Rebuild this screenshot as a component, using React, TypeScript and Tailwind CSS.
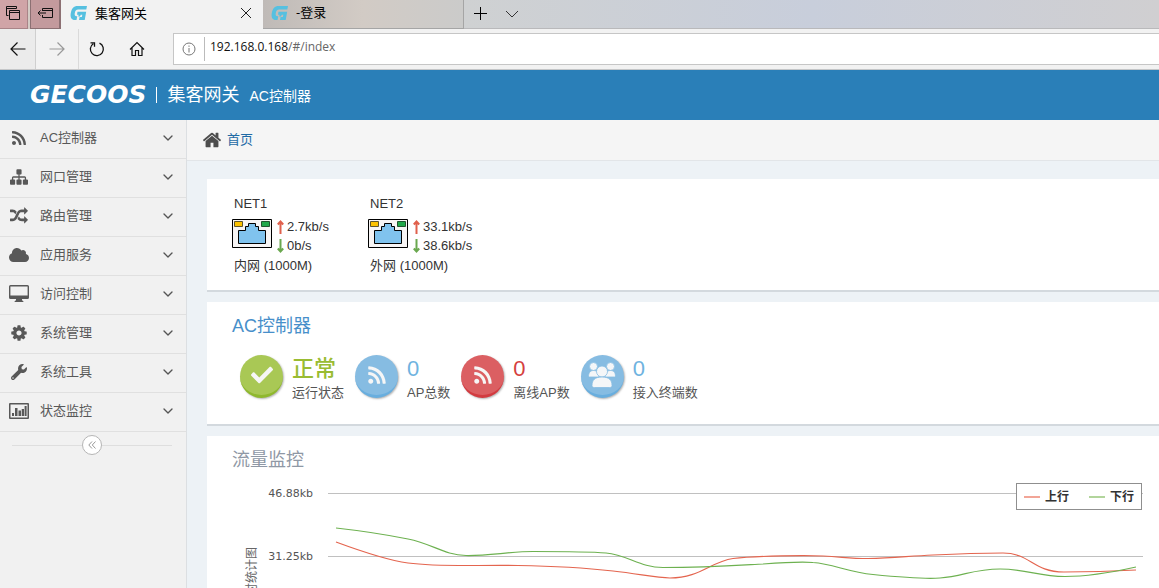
import React from "react";
import { FaRss, FaCloud, FaWrench, FaCheck } from "react-icons/fa";
import { ChevronDown } from "lucide-react";

const SANS = "font-['Liberation_Sans','Noto_Sans_CJK_SC',sans-serif]";
const UI = "font-['Open_Sans','Noto_Sans_CJK_SC',sans-serif]";

function Glyph({ d, className = "" }: { d: string; className?: string }) {
  return (
    <svg viewBox="0 0 1792 1792" fill="currentColor" className={className} aria-hidden="true">
      <path d={d} />
    </svg>
  );
}

const HOME =
  "M1472 992v480q0 26-19 45t-45 19h-384v-384h-256v384h-384q-26 0-45-19t-19-45v-480q0-1 .5-3t.5-3l575-474 575 474q1 2 1 6zm223-69l-62 74q-8 9-21 11h-3q-13 0-21-7l-692-577-692 577q-12 8-24 7-13-2-21-11l-62-74q-8-10-7-23.5t11-21.5l719-599q32-26 76-26t76 26l244 204v-195q0-14 9-23t23-9h192q14 0 23 9t9 23v408l219 182q10 8 11 21.5t-7 23.5z";
const SITEMAP =
  "M1792 1248v320q0 40-28 68t-68 28h-320q-40 0-68-28t-28-68v-320q0-40 28-68t68-28h96v-192h-512v192h96q40 0 68 28t28 68v320q0 40-28 68t-68 28h-320q-40 0-68-28t-28-68v-320q0-40 28-68t68-28h96v-192h-512v192h96q40 0 68 28t28 68v320q0 40-28 68t-68 28h-320q-40 0-68-28t-28-68v-320q0-40 28-68t68-28h96v-192q0-52 38-90t90-38h512v-192h-96q-40 0-68-28t-28-68v-320q0-40 28-68t68-28h320q40 0 68 28t28 68v320q0 40-28 68t-68 28h-96v192h512q52 0 90 38t38 90v192h96q40 0 68 28t28 68z";
const RANDOM =
  "M666 481q-60 92-137 273-22-45-37-72.5t-40.5-63.5-51-56.5-63-35-81.5-14.5h-224q-14 0-23-9t-9-23v-192q0-14 9-23t23-9h224q250 0 410 225zm1126 799q0 14-9 23l-320 320q-9 9-23 9-13 0-22.5-9.5t-9.5-22.5v-192q-32 0-85 .5t-81 1-73-1-71-5-64-10.5-63-18.5-58-28.5-59-40-55-53.5-56-69.5q59-93 136-273 22 45 37 72.5t40.5 63.5 51 56.5 63 35 81.5 14.5h256v-192q0-14 9-23t23-9q12 0 24 10l319 319q9 9 9 23zm0-896q0 14-9 23l-320 320q-9 9-23 9-13 0-22.5-9.5t-9.5-22.5v-192h-256q-48 0-87 15t-69 45-51 61.5-45 77.5q-32 62-78 171-29 66-49.5 111t-54 105-64 100-74 83-90 68.5-106.5 42-128 16.5h-224q-14 0-23-9t-9-23v-192q0-14 9-23t23-9h224q48 0 87-15t69-45 51-61.5 45-77.5q32-62 78-171 29-66 49.5-111t54-105 64-100 74-83 90-68.5 106.5-42 128-16.5h256v-192q0-14 9-23t23-9q12 0 24 10l319 319q9 9 9 23z";
const COG =
  "M1152 896q0-106-75-181t-181-75-181 75-75 181 75 181 181 75 181-75 75-181zm512-109v222q0 12-8 23t-20 13l-185 28q-19 54-39 91 35 50 107 138 10 12 10 25t-9 23q-27 37-99 108t-94 71q-12 0-26-9l-138-108q-44 23-91 38-16 136-29 186-7 28-36 28h-222q-14 0-24.5-8.5t-11.5-21.5l-28-184q-49-16-90-37l-141 107q-10 9-25 9-14 0-25-11-126-114-165-168-7-10-7-23 0-12 8-23 15-21 51-66.5t54-70.5q-27-50-41-99l-183-27q-13-2-21-12.5t-8-23.5v-222q0-12 8-23t19-13l186-28q14-46 39-92-40-57-107-138-10-12-10-24 0-10 9-23 26-36 98.5-107.5t94.5-71.5q13 0 26 10l138 107q44-23 91-38 16-136 29-186 7-28 36-28h222q14 0 24.5 8.5t11.5 21.5l28 184q49 16 90 37l142-107q9-9 24-9 13 0 25 10 129 119 165 170 7 8 7 22 0 12-8 23-15 21-51 66.5t-54 70.5q26 50 41 98l183 28q13 2 21 12.5t8 23.5z";

function DesktopIcon() {
  return (
    <svg viewBox="0 0 20 18" className="h-[18px] w-5" aria-hidden="true">
      <path
        fill="currentColor"
        fillRule="evenodd"
        d="M1.5 0h17A1.5 1.5 0 0 1 20 1.5v11a1.5 1.5 0 0 1-1.5 1.5H13v1.2l1.4 1V17H5.600v-.8l1.4-1V14H1.500A1.500 1.500 0 0 1 0 12.500v-11A1.500 1.500 0 0 1 1.500 0zM1.400 1.400v9.200h17.200V1.400z"
      />
    </svg>
  );
}

function BarsIcon() {
  return (
    <svg viewBox="0 0 20 16" className="h-4 w-5" fill="currentColor" aria-hidden="true">
      <path fillRule="evenodd" d="M1 0h18a1 1 0 0 1 1 1v14a1 1 0 0 1-1 1H1a1 1 0 0 1-1-1V1a1 1 0 0 1 1-1zm.5 1.500v13h17v-13z" />
      <path d="M3 10h2v3H3zM6 5h2.500v8H6zM9.500 7.500H12V13H9.500zM12.700 6H15v7h-2.300zM15.600 3h2v10h-2z" />
    </svg>
  );
}

function BrandMark({ className = "" }: { className?: string }) {
  return (
    <svg viewBox="0 0 17 15" className={className} fill="#56c0e0" aria-hidden="true">
      <path d="M7.500 0H17l-.7 3.500H8.200C6 3.500 5.200 4.800 4.800 7c-.4 2 0 3.200 1.700 3.200h.8L6.500 14H5C1.500 14 0 11.500.8 7 1.600 2.500 3.800 0 7.500 0z" />
      <path d="M7.500 5.800h8.700L14.700 14H9l.6-3h2.300l.4-2.300h-1.500L9.900 10.500H8.200l.4-1.800H7z" />
    </svg>
  );
}

const MENU: { label: string; icon: React.ReactNode }[] = [
  { label: "AC控制器", icon: <FaRss className="size-4" /> },
  { label: "网口管理", icon: <Glyph d={SITEMAP} className="size-[18px]" /> },
  { label: "路由管理", icon: <Glyph d={RANDOM} className="size-[18px]" /> },
  { label: "应用服务", icon: <FaCloud className="size-5" /> },
  { label: "访问控制", icon: <DesktopIcon /> },
  { label: "系统管理", icon: <Glyph d={COG} className="size-[18px]" /> },
  { label: "系统工具", icon: <FaWrench className="size-4" /> },
  { label: "状态监控", icon: <BarsIcon /> },
];

function BrowserChrome() {
  return (
    <header className={`shrink-0 bg-[#f2f2f2] text-black ${UI}`}>
      <div className="flex h-[29px] bg-linear-to-r from-[#d4cbc4] via-[#cccfd1] to-[#cfd0d2]">
        <button aria-label="标签页" className="flex w-7 items-center justify-center border-r border-b border-[#a98488] bg-[#d0a4a7] pr-0.5 pb-0.5">
          <svg viewBox="0 0 16 16" className="size-4" fill="none" stroke="#111" aria-hidden="true">
            <path d="M3.500 10.500h-2v-9h10v2M1.500 3.500h10M4.500 5.500h10v9h-10zM4.500 7.500h10" />
          </svg>
        </button>
        <button aria-label="搁置标签页" className="ml-0.5 flex w-[31px] items-center justify-center border border-t-0 border-r-2 border-[#8c7073] bg-[#c39a9d] pb-0.5">
          <svg viewBox="0 0 17 14" className="h-3.5 w-[17px]" fill="none" stroke="#111" aria-hidden="true">
            <path d="M5.500 5V2.500h10v9h-10V9M5.500 4.500h10M1 7h8M3.500 4.500 1 7l2.500 2.500" />
          </svg>
        </button>
        <div className="flex w-[202px] items-center bg-[#f2f2f2] pb-1 pl-[9px]">
          <BrandMark className="mt-0.5 h-[15px] w-[17px]" />
          <span className="ml-2 flex-1 text-[13px] leading-5">集客网关</span>
          <button aria-label="关闭标签页" className="mr-[11px]">
            <svg viewBox="0 0 12 12" className="size-3" stroke="#222" aria-hidden="true">
              <path d="m1 1 10 10M11 1 1 11" />
            </svg>
          </button>
        </div>
        <div className="flex w-[201px] items-center border-r border-b border-[#a5a5a5] bg-linear-to-r from-[#bfbab7] via-[#d2cbc5] to-[#cbcbca] pb-1 pl-2">
          <BrandMark className="mt-0.5 h-[15px] w-[17px]" />
          <span className="ml-2 text-[13px] leading-5">-登录</span>
        </div>
        <div className="flex flex-1 items-center gap-[18px] border-b border-[#b9b9bb] bg-linear-to-r from-[#cfd1d2] via-[#c8cedb] to-[#d0cfd1] pl-[9px]">
          <button aria-label="新建标签页">
            <svg viewBox="0 0 14 14" className="size-3.5" stroke="#000" aria-hidden="true">
              <path d="M7.500 0v13M1 6.500h13" />
            </svg>
          </button>
          <button aria-label="标签页列表">
            <svg viewBox="0 0 14 8" className="h-2 w-3.5" fill="none" stroke="#333" aria-hidden="true">
              <path d="m1 1 6 6 6-6" />
            </svg>
          </button>
        </div>
      </div>
      <div className="flex h-[41px] items-stretch border-b border-[#c4c6c8] text-[#111]">
        <button aria-label="后退" className="flex w-9 items-center justify-center border-r border-[#cfcfcf] bg-[#ebebeb]">
          <svg viewBox="0 0 16 14" className="h-3.5 w-4" fill="none" stroke="currentColor" strokeWidth="1.200" aria-hidden="true">
            <path d="M15.500 7H1M7.500.5 1 7l6.500 6.500" />
          </svg>
        </button>
        <button aria-label="前进" className="flex w-[42px] items-center justify-center text-[#999]">
          <svg viewBox="0 0 16 14" className="h-3.5 w-4" fill="none" stroke="currentColor" strokeWidth="1.200" aria-hidden="true">
            <path d="M.5 7H15M8.500.5 15 7l-6.500 6.500" />
          </svg>
        </button>
        <button aria-label="刷新" className="flex w-[37px] items-center justify-center border-l border-[#dadada]">
          <svg viewBox="0 0 16 16" className="size-4" fill="none" stroke="currentColor" strokeWidth="1.300" aria-hidden="true">
            <path d="M10.500 2.200A6.500 6.500 0 1 1 4.300 2.700M1.500 1.800h4v4" />
          </svg>
        </button>
        <button aria-label="主页" className="flex w-11 items-center justify-center">
          <svg viewBox="0 0 16 16" className="size-4" fill="none" stroke="currentColor" strokeWidth="1.200" aria-hidden="true">
            <path d="m1 8.500 7-7 7 7M3 7v7.500h3.500v-5h3v5H13V7" />
          </svg>
        </button>
        <div className="mt-1 mb-1 ml-3.5 flex flex-1 items-center border border-r-0 border-[#c6c6c6] bg-white">
          <svg viewBox="0 0 14 14" className="ml-2 size-3.5" fill="none" stroke="#777" aria-hidden="true">
            <circle cx="7" cy="7" r="6" />
            <path d="M7 6v4.500M7 3.500v1.300" />
          </svg>
          <span className="ml-2 h-6 w-px bg-[#bbb]" />
          <a href="#/index" className="ml-[5px] pb-1 text-[12px] leading-4 text-[#111]">
            192.168.0.168<span className="text-[#666]">/#/index</span>
          </a>
        </div>
      </div>
    </header>
  );
}

function Sidebar() {
  return (
    <nav className="w-[187px] shrink-0 border-r border-[#dcdfe2] bg-[#f1f1f1] text-[#585858]">
      <ul>
        {MENU.map((m) => (
          <li key={m.label} className="border-b border-[#e0e0e0]">
            <button className="flex h-[38px] w-full items-center pr-2.5 pb-0.5 pl-[9px] text-left">
              <span className="flex w-5 justify-center">{m.icon}</span>
              <span className="ml-[11px] flex-1 text-[13px] leading-5">{m.label}</span>
              <ChevronDown className="size-4 text-[#555]" strokeWidth={2} />
            </button>
          </li>
        ))}
      </ul>
      <div className="mt-[3px] flex items-center pr-3.5 pl-3">
        <span className="h-px flex-1 bg-[#dedede]" />
        <button aria-label="收起菜单" className="flex size-5 items-center justify-center rounded-full border border-[#b5b5b5] bg-white">
          <svg viewBox="0 0 8 8" className="size-2" fill="none" stroke="#999" aria-hidden="true">
            <path d="M4 .5.8 4 4 7.500M7.500.5 4.300 4l3.200 3.500" />
          </svg>
        </button>
        <span className="h-px flex-1 bg-[#dedede]" />
      </div>
    </nav>
  );
}

function PortIcon() {
  return (
    <svg viewBox="0 0 40 29" className="h-[29px] w-10" aria-hidden="true">
      <path d="M.5.5h39v28H.5z" fill="#f7f5f5" stroke="#000" />
      <path d="M2.500 2.500h8v5h-8z" fill="#fcc200" stroke="#5d552c" />
      <path d="M29.500 2.500h8v5h-8z" fill="#20a84a" stroke="#20552f" />
      <path d="M6.500 24.500v-13h7v-4h3v-3h7v3h3v4h7v13z" fill="#80c3ee" stroke="#000" />
    </svg>
  );
}

function Arrow({ down = false }: { down?: boolean }) {
  return (
    <svg viewBox="0 0 7 14" className="h-3.5 w-[7px]" fill="none" strokeWidth="2" stroke={down ? "#6aa84f" : "#e0604c"} aria-hidden="true">
      <path d={down ? "M3.500 0v12M.8 9.500l2.700 3 2.700-3" : "M3.500 14V2M.8 4.500l2.700-3 2.700 3"} />
    </svg>
  );
}

function Port({ name, up, down, kind }: { name: string; up: string; down: string; kind: string }) {
  return (
    <div className="w-[136px] text-[13px] text-[#333]">
      <div className="pl-0.5 leading-[18px]">{name}</div>
      <div className="mt-1 flex items-start">
        <div className="pt-0.5">
          <PortIcon />
        </div>
        <div className="ml-[5px] leading-[19px]">
          <div className="flex items-center gap-[3px]">
            <Arrow />
            {up}
          </div>
          <div className="flex items-center gap-[3px]">
            <Arrow down />
            {down}
          </div>
        </div>
      </div>
      <div className="mt-0.5 pl-0.5 leading-[18px]">{kind} (1000M)</div>
    </div>
  );
}

function UsersIcon() {
  return (
    <svg viewBox="0 0 28 26" className="h-[26px] w-7" fill="#f4f6f8" stroke="#86bce2" strokeWidth=".8" aria-hidden="true">
      <circle cx="5.500" cy="4.500" r="4" />
      <circle cx="22.500" cy="4.500" r="4" />
      <path d="M.5 15c0-4 1.500-6.500 5-6.500S11 11 11 15zM17 15c0-4 1.500-6.500 5.500-6.500s5 2.500 5 6.500z" />
      <circle cx="14" cy="9.500" r="5.500" />
      <path d="M4 23.500c0-5 2.500-8.500 10-8.500s10 3.500 10 8.500c0 1.500-1 2-2.500 2h-15c-1.500 0-2.500-.5-2.500-2z" />
    </svg>
  );
}

const DISCS = {
  green: "border-b-[#8fb82e] bg-[#a9c855]",
  blue: "border-b-[#69aede] bg-[#86bce2]",
  red: "border-b-[#d23b40] bg-[#db5f62]",
};

function Stat({ tone, icon, value, label, color }: { tone: keyof typeof DISCS; icon: React.ReactNode; value: string; label: string; color: string }) {
  return (
    <div className="flex items-start">
      <div className={`flex size-[43px] items-center justify-center rounded-full border-b-3 text-[#f6f6f6] shadow-[1px_1px_2px_rgba(0,0,0,0.3)] ${DISCS[tone]}`}>
        {icon}
      </div>
      <div className="ml-[9px]">
        <div className={`text-[22px] leading-7 ${color}`}>{value}</div>
        <div className="text-[13px] leading-5 text-[#555]">{label}</div>
      </div>
    </div>
  );
}

const CARD = "border-b-2 border-[#d3d9de] bg-white pl-[25px]";

function TrafficChart() {
  return (
    <div className="relative mt-[13px] flex pr-4 text-[#555]">
      <div className="flex w-7 items-start justify-end pt-[62px]">
        <span className="rotate-180 text-[12px] leading-4 whitespace-nowrap text-[#666] [text-orientation:sideways] [writing-mode:vertical-rl]">
          实时统计图
        </span>
      </div>
      <div className="w-[53px] pt-px text-right font-['DejaVu_Sans',sans-serif] text-[11px] leading-4">
        <div className="mb-[47px]">46.88kb</div>
        <div>31.25kb</div>
      </div>
      <svg viewBox="0 0 815 190" preserveAspectRatio="none" className="ml-[15px] h-[190px] min-w-0 flex-1" fill="none" aria-label="流量监控">
        <path d="M0 8.500h815M0 71.500h815M0 134.500h815" stroke="#c0c0c0" vectorEffect="non-scaling-stroke" />
        <path
          stroke="#e4654f"
          strokeWidth="1.200"
          vectorEffect="non-scaling-stroke"
          d="M8 57C35 67 58 75 80 78C110 82 140 80 190 80.500C225 81 255 82.500 285 86C312 89 328 93 342 93C372 93 382 77 405 73.500C430 70.500 480 70.500 495 71C515 72 522 73.500 540 73.500C565 73.500 580 71 605 70C635 68.500 660 68 675 68C702 68 705 87 736 87C760 87 790 86 808 85"
        />
        <path
          stroke="#6db150"
          strokeWidth="1.200"
          vectorEffect="non-scaling-stroke"
          d="M8 43C35 46 60 50 80 54C105 59 116 70 138 70.500C160 71 182 66.500 205 66.500C235 66.500 260 66.500 278 68C300 70 312 82.500 335 82.500C380 82.500 415 80 435 79C455 77.500 475 76.500 485 77.500C505 79 520 87 545 89.500C570 92 600 94 612 93C635 91.500 645 84 672 84C700 84 710 91.500 737 91.500C760 91.500 790 86 808 82"
        />
      </svg>
      <div className="absolute -top-0.5 right-[17px] flex h-[27px] w-[126px] items-center border border-[#8f8f8f] bg-white pl-[7px] text-[12px] font-bold text-[#333]">
        <span className="h-0.5 w-4 bg-[#f2a597]" />
        <span className="ml-[5px]">上行</span>
        <span className="ml-5 h-0.5 w-4 bg-[#b2d59c]" />
        <span className="ml-[5px]">下行</span>
      </div>
    </div>
  );
}

export default function App() {
  return (
    <div className={`flex h-screen flex-col overflow-hidden bg-[#edf2f6] ${SANS}`}>
      <BrowserChrome />
      <div className="flex h-[50px] shrink-0 items-center bg-[#2a7fb8] pl-[30px] text-white">
        <span className="font-['DejaVu_Sans',sans-serif] text-[25px] leading-8 font-bold italic">GECOOS</span>
        <span className="ml-2.5 h-4 w-px bg-white" />
        <span className="ml-2.5 text-[18px] leading-6">集客网关</span>
        <span className="ml-2.5 pt-0.5 text-[14px] leading-6">AC控制器</span>
      </div>
      <div className="flex min-h-0 flex-1">
        <Sidebar />
        <main className="min-w-0 flex-1 overflow-hidden">
          <div className="flex h-[41px] items-center border-b border-[#e2e5e8] bg-[#f5f5f5] pl-[15px]">
            <Glyph d={HOME} className="size-5 text-[#4d4d4d]" />
            <a href="#/index" className="ml-[5px] text-[13px] leading-5 text-[#1f6ba5]">
              首页
            </a>
          </div>
          <div className="flex flex-col gap-2.5 pt-[18px] pl-5">
            <section className={`${CARD} flex pt-4 pb-[15px]`}>
              <Port name="NET1" up="2.7kb/s" down="0b/s" kind="内网" />
              <Port name="NET2" up="33.1kb/s" down="38.6kb/s" kind="外网" />
            </section>
            <section className={`${CARD} pt-3 pb-[21px]`}>
              <h2 className="text-[18px] leading-6 text-[#478fca]">AC控制器</h2>
              <div className="mt-[17px] flex gap-[11px] pl-2">
                <Stat tone="green" icon={<FaCheck className="size-[22px]" />} value="正常" label="运行状态" color="font-medium text-[#9abc32]" />
                <Stat tone="blue" icon={<FaRss className="size-5" />} value="0" label="AP总数" color="text-[#6fb3e0]" />
                <Stat tone="red" icon={<FaRss className="size-5" />} value="0" label="离线AP数" color="text-[#d53f40]" />
                <Stat tone="blue" icon={<UsersIcon />} value="0" label="接入终端数" color="text-[#6fb3e0]" />
              </div>
            </section>
            <section className={`${CARD} pt-3`}>
              <h2 className="text-[18px] leading-6 text-[#8f98a5]">流量监控</h2>
              <TrafficChart />
            </section>
          </div>
        </main>
      </div>
    </div>
  );
}
